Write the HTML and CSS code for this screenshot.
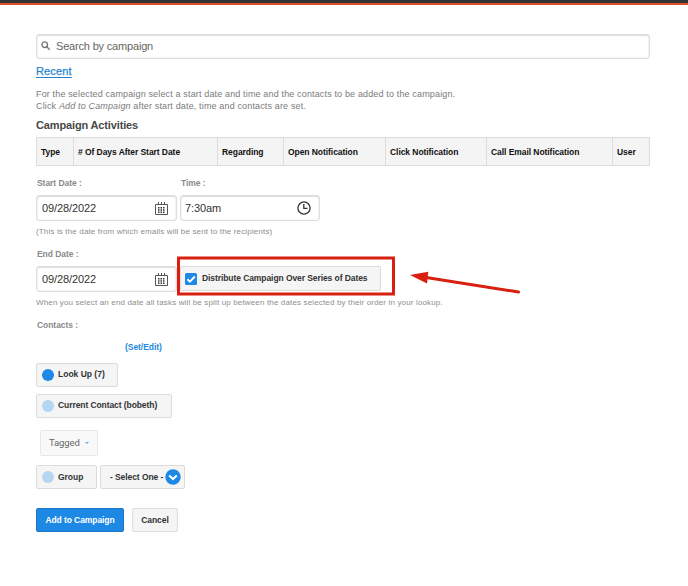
FILE: index.html
```html
<!DOCTYPE html>
<html lang="en">
<head>
<meta charset="utf-8">
<title>Add to Campaign</title>
<link rel="stylesheet" href="styles.css">
</head>
<body>
<div class="topbar"></div>
<main class="page">
  <div class="field search">
    <svg class="search-icon" width="10" height="10" viewBox="0 0 10 10"><circle cx="3.700" cy="3.700" r="2.800"/><path d="M5.800 5.800 8.700 8.700"/></svg>
    <span class="search-text">Search by campaign</span>
  </div>
  <div class="recent-row"><a class="recent">Recent</a></div>
  <p class="intro">For the selected campaign select a start date and time and the contacts to be added to the campaign.<br>Click <em>Add to Campaign</em> after start date, time and contacts are set.</p>
  <h2 class="heading">Campaign Activities</h2>
  <div class="activities">
    <div>Type</div><div># Of Days After Start Date</div><div>Regarding</div><div>Open Notification</div><div>Click Notification</div><div>Call Email Notification</div><div>User</div>
  </div>
  <div class="labels start-labels"><span class="l-start">Start Date :</span><span>Time :</span></div>
  <div class="row">
    <div class="field input"><span class="value">09/28/2022</span>
      <svg class="calendar" width="13" height="13" viewBox="0 0 13 13"><path class="line" d="M.5 2.500h12v10H.5zM3.500 0v3M6.500 0v3M9.500 0v3"/><path class="dots" d="M3 5.800h7.500M3 8h7.500M3 10.200h7.500"/></svg></div>
    <div class="field input time"><span class="value">7:30am</span>
      <svg class="clock" width="14" height="14" viewBox="0 0 14 14"><circle cx="7" cy="7" r="6.100"/><path d="M6.800 3v4.300H10.500"/></svg></div>
  </div>
  <div class="note">(This is the date from which emails will be sent to the recipients)</div>
  <div class="labels end-labels"><span>End Date :</span></div>
  <div class="row">
    <div class="field input"><span class="value">09/28/2022</span>
      <svg class="calendar" width="13" height="13" viewBox="0 0 13 13"><path class="line" d="M.5 2.500h12v10H.5zM3.500 0v3M6.500 0v3M9.500 0v3"/><path class="dots" d="M3 5.800h7.500M3 8h7.500M3 10.200h7.500"/></svg></div>
    <div class="button distribute">
      <svg class="check" width="12" height="12" viewBox="0 0 12 12"><rect width="12" height="12" rx="1.500"/><path d="M2.400 6.300 4.900 8.700 9.800 3.500"/></svg>
      <span>Distribute Campaign Over Series of Dates</span>
    </div>
    <svg class="callout" width="350" height="44" viewBox="0 0 350 44"><rect x="2.500" y="2" width="215" height="36"/><path class="shaft" d="M247 21 342.500 36"/><path class="head" d="M234 19 252.300 15.700 251 27.500z"/></svg>
  </div>
  <div class="note">When you select an end date all tasks will be split up between the dates selected by their order in your lookup.</div>
  <div class="labels contact-labels"><span>Contacts :</span></div>
  <div class="edit-row"><a>(Set/Edit)</a></div>
  <div class="button lookup"><i class="radio on"></i><span>Look Up (7)</span></div>
  <div class="button current"><i class="radio"></i><span>Current Contact (bobeth)</span></div>
  <div class="button tagged"><span>Tagged</span><i class="caret"></i></div>
  <div class="row">
    <div class="button group"><i class="radio"></i><span>Group</span></div>
    <div class="button select"><span>- Select One -</span>
      <svg width="16" height="16" viewBox="0 0 16 16"><circle cx="8" cy="8" r="7.700"/><path d="m4.200 6.400 3.800 3.600 3.800-3.600"/></svg></div>
  </div>
  <div class="row actions">
    <div class="button primary"><span>Add to Campaign</span></div>
    <div class="button cancel"><span>Cancel</span></div>
  </div>
</main>
</body>
</html>
```

FILE: styles.css
```css
* { box-sizing: border-box; }
body { margin: 0; background: #fff; font-family: "Liberation Sans", Arial, sans-serif; height: 586px; overflow: hidden; }
span, a, .note, .intro { white-space: nowrap; }
svg { display: block; flex: none; }
.topbar { height: 5px; background: #333; border-bottom: 2px solid #de4f28; }
.page { width: 614px; margin: 29px 0 0 36px; }
.field { display: flex; align-items: center; background: #fff; border: 1px solid #ddd; border-radius: 3px; box-shadow: inset 0 1px 1px #ddd, inset 0 0 2px #e4e4e4; }
.search { height: 25px; padding: 0 0 2px 4px; }
.search-icon { fill: none; stroke: #777; stroke-width: 1.400; }
.search-text { margin-left: 5px; font-size: 11px; color: #666; letter-spacing: -.18px; }
.recent-row { height: 29px; padding-top: 6px; line-height: 13px; font-size: 11px; letter-spacing: .15px; }
.recent { color: #2484d1; text-decoration: underline; text-underline-offset: 2px; -webkit-text-stroke: .25px #2484d1; }
.intro { margin: 0; height: 28px; font-size: 9px; line-height: 12px; color: #7b7b7b; letter-spacing: .15px; }
.heading { margin: 0; height: 21px; line-height: 19px; font-size: 11px; color: #484848; letter-spacing: -.14px; }
.activities { display: grid; grid-template-columns: 37px 144px 66px 102px 101px 126px 37px; height: 29px; border: 1px solid #dcdcdc; border-right: 0; background: #f4f4f4; width: 614px; }
.activities div { border-right: 1px solid #dcdcdc; padding: 1px 0 0 4px; display: flex; align-items: center; font-size: 8.500px; font-weight: bold; color: #111; letter-spacing: -.06px; white-space: nowrap; }
.labels { display: flex; font-size: 8.500px; font-weight: bold; color: #8a8a8a; padding-left: 1px; line-height: 12px; letter-spacing: -.05px; }
.start-labels { height: 29px; padding-top: 11px; }
.l-start { width: 144px; }
.row { display: flex; gap: 3px; position: relative; }
.input { width: 141px; height: 26px; padding: 0 8px 0 5px; justify-content: space-between; }
.input.time { width: 140px; padding-left: 4px; }
.value { font-size: 11px; color: #333; letter-spacing: -.1px; }
.calendar .line { fill: none; stroke: #555; stroke-width: 1; }
.calendar .dots { stroke: #333; stroke-width: 1.400; stroke-dasharray: 1.500 1; }
.clock { fill: none; stroke: #333; stroke-width: 1.300; }
.note { height: 27px; padding-top: 5px; font-size: 8px; line-height: 12px; color: #8e8e8e; letter-spacing: .15px; }
.end-labels { height: 18px; }
.contact-labels { height: 22px; }
.edit-row { height: 22px; padding-left: 89px; line-height: 12px; font-size: 8.500px; font-weight: bold; color: #1e88e5; letter-spacing: -.05px; }
.button { display: flex; align-items: center; height: 24px; background: #f5f5f5; border: 1px solid #dcdcdc; border-radius: 2px; font-size: 8.500px; font-weight: bold; color: #333; letter-spacing: -.08px; }
.distribute { width: 201px; height: 25px; padding-left: 4px; gap: 5px; }
.distribute span, .lookup span, .current span { padding-bottom: 2px; }
.check rect { fill: #1e88e5; }
.check path { fill: none; stroke: #fff; stroke-width: 1.900; }
.callout { position: absolute; left: 140px; top: -10px; fill: none; stroke: #d81f10; stroke-width: 3; }
.callout .shaft { stroke-linecap: round; }
.callout .head { fill: #d81f10; stroke: none; }
.radio { width: 12px; height: 12px; border-radius: 50%; background: #b5d5f1; margin: 0 4px 0 5px; flex: none; }
.radio.on { background: #1e88e5; }
.lookup { width: 82px; margin-bottom: 7px; letter-spacing: 0; }
.current { width: 136px; margin-bottom: 12px; }
.tagged { width: 58px; height: 26px; margin: 0 0 9px 4px; padding: 0 0 2px 8px; background: #f9f9f9; border-color: #e7e7e7; font-family: Roboto, sans-serif; font-weight: normal; font-size: 9.500px; color: #666; letter-spacing: -.1px; }
.caret { margin: 2px 0 0 5px; border: 2.500px solid transparent; border-top-color: #64aae9; border-bottom: 0; }
.group { width: 61px; letter-spacing: -.03px; }
.select { width: 85px; padding: 0 3px 0 9px; justify-content: space-between; }
.select circle { fill: #1e88e5; }
.select path { fill: none; stroke: #fff; stroke-width: 2; }
.actions { margin-top: 19px; gap: 8px; }
.primary { width: 88px; background: #1e88e5; border-color: #1976c9; color: #fff; justify-content: center; }
.cancel { width: 46px; justify-content: center; }
```
